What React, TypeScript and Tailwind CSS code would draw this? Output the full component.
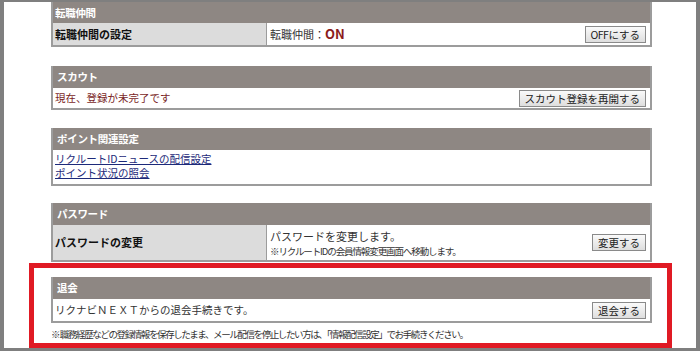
const font = { fontFamily: '"Noto Sans CJK JP", "Noto Sans", sans-serif' };

function Btn({ children }: { children: React.ReactNode }) {
  return (
    <button className="h-[17px] px-[5px] border border-[#8a8a8a] bg-gradient-to-b from-[#fafafa] to-[#dedede] text-[10.5px] leading-[15px] text-[#222]">
      {children}
    </button>
  );
}

function Header({ title }: { title: string }) {
  return (
    <div className="h-[22px] bg-[#8e8783] pl-[4px] flex items-center text-white text-[10.5px] font-bold tracking-[-0.3px]">
      {title}
    </div>
  );
}

export default function App() {
  return (
    <div style={font} className="w-[700px] h-[351px] bg-[#7f7f7f] pt-[2px] pl-[4px] pr-[4px] pb-[3px]">
      <div className="h-full bg-white flex flex-col overflow-hidden">
        {/* 転職仲間 */}
        <div className="ml-[47px] w-[601px] border-x-2 border-b-2 border-[#9c9c9c]">
          <div className="h-[21px] bg-[#8e8783] pl-[2px] flex items-center text-white text-[10.5px] font-bold tracking-[-0.3px]">転職仲間</div>
          <div className="flex h-[22px]">
            <div className="w-[214px] bg-[#dcdcdc] border-r border-[#9c9c9c] pl-[2px] flex items-center text-[11px] font-bold text-[#111]">転職仲間の設定</div>
            <div className="flex-1 flex items-center justify-between pl-[3px] pr-[4px]">
              <span className="text-[11px] text-[#333]">
                転職仲間：<span className="text-[13px] font-bold text-[#8b1c1c]">ON</span>
              </span>
              <Btn><span className="tracking-[-0.5px]">OFF</span>にする</Btn>
            </div>
          </div>
        </div>

        {/* スカウト */}
        <div className="mt-[19px] ml-[47px] w-[601px] border-x-2 border-b-2 border-[#9c9c9c]">
          <Header title="スカウト" />
          <div className="h-[20px] flex items-center justify-between pl-[2px] pr-[4px]">
            <span className="text-[10.5px] text-[#7a1f1f]">現在、登録が未完了です</span>
            <Btn>スカウト登録を再開する</Btn>
          </div>
        </div>

        {/* ポイント関連設定 */}
        <div className="mt-[18px] ml-[47px] w-[601px] border-x-2 border-b-2 border-[#9c9c9c]">
          <Header title="ポイント関連設定" />
          <div className="h-[34px] pl-[2px] pt-[2px] flex flex-col text-[10.5px] leading-[14px] text-[#1d2a7a]">
            <a className="underline w-fit">リクルートIDニュースの配信設定</a>
            <a className="underline w-fit">ポイント状況の照会</a>
          </div>
        </div>

        {/* パスワード */}
        <div className="mt-[17px] ml-[47px] w-[601px] border-x-2 border-b-2 border-[#9c9c9c]">
          <Header title="パスワード" />
          <div className="flex h-[35px]">
            <div className="w-[214px] bg-[#dcdcdc] border-r border-[#9c9c9c] pl-[2px] flex items-center text-[11px] font-bold text-[#111]">パスワードの変更</div>
            <div className="flex-1 flex items-center justify-between pl-[3px] pr-[4px]">
              <div className="flex flex-col">
                <span className="text-[11px] leading-[16px] text-[#333]">パスワードを変更します。</span>
                <span className="text-[9.5px] leading-[14px] tracking-[-1.1px] text-[#333]">※リクルートIDの会員情報変更画面へ移動します。</span>
              </div>
              <Btn>変更する</Btn>
            </div>
          </div>
        </div>

        {/* 退会 */}
        <div className="mt-[1px] ml-[25px] w-[643px] h-[86px] border-[5px] border-[#e01a24] pt-[9px] pl-[17px]">
          <div className="w-[601px] border-x-2 border-b-2 border-[#9c9c9c]">
            <Header title="退会" />
            <div className="h-[22px] flex items-center justify-between pl-[2px] pr-[4px]">
              <span className="text-[10.5px] text-[#333]">リクナビＮＥＸＴからの退会手続きです。</span>
              <Btn>退会する</Btn>
            </div>
          </div>
          <div className="mt-[5px] text-[9.5px] leading-[12px] tracking-[-1.4px] text-[#333]">
            ※ 職務経歴などの登録情報を保存したまま、メール配信を停止したい方は、「情報配信設定」でお手続きください。
          </div>
        </div>
      </div>
    </div>
  );
}
